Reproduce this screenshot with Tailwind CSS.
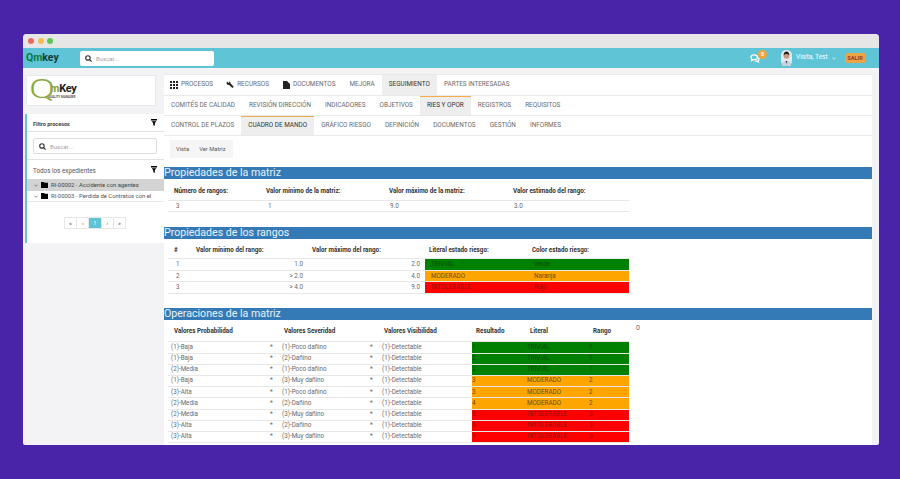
<!DOCTYPE html>
<html lang="es">
<head>
<meta charset="UTF-8">
<title>Qmkey</title>
<script src="https://cdn.jsdelivr.net/npm/@tailwindcss/browser@4"></script>
</head>
<body class="bg-[#4a24a8] h-[479px] overflow-hidden pt-[34px] font-['Roboto',sans-serif] text-[#676a6c]">
<div class="ml-[23px] w-[856px] h-[411px] rounded-t-[4px] rounded-b-[2px] overflow-hidden bg-[#f3f3f6] flex flex-col">
  <!-- window bar -->
  <div class="h-[14px] bg-[#e6e6e6] flex items-center gap-[3.5px] pl-[5px] shrink-0">
    <span class="w-[6px] h-[6px] rounded-full bg-[#ee6a5f]"></span>
    <span class="w-[6px] h-[6px] rounded-full bg-[#f5bd4f]"></span>
    <span class="w-[6px] h-[6px] rounded-full bg-[#61c454]"></span>
  </div>
  <!-- header -->
  <div class="h-[20px] bg-[#5fc4d6] flex items-center shrink-0 pl-[3px] pr-[14px]">
    <div class="w-[54px] text-[10.5px] font-bold leading-none"><span class="text-[#0c7a3c]">Qm</span><span class="text-[#123c3c]">key</span></div>
    <div class="w-[134px] h-[15px] bg-white rounded-[2px] flex items-center pl-[5px] gap-[4px]">
      <svg class="w-[7px] h-[7px]" viewBox="0 0 10 10" fill="none" stroke="#333" stroke-width="1.6"><circle cx="4.2" cy="4.2" r="3.2"/><path d="M6.600 6.600 9.500 9.500"/></svg>
      <span class="text-[6px] text-[#a5a5a5]">Buscar...</span>
    </div>
    <div class="ml-auto flex items-center">
      <div class="relative w-[14px] h-[14px] mr-[17px]">
        <svg class="absolute left-0 top-[3px] w-[10px] h-[9px]" viewBox="0 0 12 11" fill="none" stroke="#fff" stroke-width="1.5"><path d="M5 1C2.600 1 1 2.300 1 4c0 1 .5 1.700 1.200 2.300L1.800 8l2-1.100c.4.100.8.100 1.200.100 2.400 0 4-1.300 4-3S7.400 1 5 1Z"/><path d="M10.200 4.500c.6.500.8 1.100.8 1.700 0 .8-.4 1.400-1 1.900l.3 1.500-1.800-.9c-1 .1-2-.1-2.700-.6"/></svg>
        <span class="absolute left-[8px] -top-[1px] w-[9px] h-[9px] rounded-full bg-[#f0a63c] text-white text-[5px] font-bold leading-[9px] text-center">0</span>
      </div>
      <svg class="w-[11px] h-[16px] mr-[4px]" viewBox="0 0 11 16"><rect width="11" height="16" rx="5" fill="#e3e6ea"/><path d="M1 16c0-4 2-5 4.500-5s4.500 1 4.500 5Z" fill="#c9d3dc"/><circle cx="5.500" cy="6" r="2.800" fill="#c79a80"/><path d="M2.700 5.500C2.500 2.500 4 1.500 5.500 1.500s3 1 2.800 4C7.500 4 5 4 4.300 4.200 3.500 4.300 3 5 2.700 5.500Z" fill="#22201e"/><path d="M4.700 11h1.600l-.8 3Z" fill="#33414d"/></svg>
      <span class="text-[6.500px] text-white w-[36px] whitespace-nowrap">Visita, Test</span>
      <svg class="w-[4px] h-[3px] mr-[9px]" viewBox="0 0 6 4" fill="none" stroke="#fff" stroke-width="1"><path d="M.5.700 3 3.200 5.500.700"/></svg>
      <span class="w-[20px] h-[10px] bg-[#eba544] rounded-[1px] text-[#9c3434] text-[5.600px] font-bold leading-[10px] text-center">SALIR</span>
    </div>
  </div>
  <!-- body -->
  <div class="flex flex-1 min-h-0 pl-[2px]">
    <!-- left -->
    <div class="w-[139px] shrink-0 flex flex-col pt-[7px]">
      <div class="ml-[1px] w-[130px] h-[31px] bg-white border border-[#e7eaec] flex items-center pl-[2px] shrink-0">
        <div class="w-[50px] h-[20px] flex flex-col">
          <div class="flex items-center h-[18px] leading-none">
            <span class="w-[17px] text-[25px] font-light text-[#8aa93f] origin-left scale-x-[1.55] leading-[18px]">Q</span>
            <span class="ml-[4px] -mt-[3px] text-[11px] font-bold tracking-[-0.3px] whitespace-nowrap"><span class="text-[#7f9e3a]">m</span><span class="text-[#222]">Key</span></span>
          </div>
          <span class="ml-[19px] -mt-[3px] text-[3px] font-bold text-[#555] leading-none whitespace-nowrap">QUALITY MANAGER</span>
        </div>
      </div>
      <div class="mt-[8px] h-[129px] bg-white border-l-2 border-[#5fc4d6] shrink-0">
        <div class="h-[18px] border-b border-[#e2e2e2] flex items-center justify-between pl-[6px] pr-[7px]">
          <span class="pt-[4px] text-[5.500px] font-bold text-[#444]">Filtro procesos</span>
          <svg class="w-[6px] h-[7px]" viewBox="0 0 6 7"><rect width="6" height="1.500"/><path d="M.7 2.200h4.600L3.800 4.200V7L2.200 6V4.200Z"/></svg>
        </div>
        <div class="h-[28px] border-b border-[#e2e2e2] pl-[6px] pt-[6px]">
          <div class="w-[124px] h-[16px] border border-[#dcdcdc] rounded-[2px] flex items-center pl-[5px] gap-[4px]">
            <svg class="w-[7px] h-[7px]" viewBox="0 0 10 10" fill="none" stroke="#333" stroke-width="1.6"><circle cx="4.200" cy="4.200" r="3.200"/><path d="M6.600 6.600 9.500 9.500"/></svg>
            <span class="text-[6px] text-[#a5a5a5]">Buscar...</span>
          </div>
        </div>
        <div class="h-[19px] flex items-center justify-between pl-[6px] pr-[7px]">
          <span class="pt-[4px] text-[6.300px] text-[#555]">Todos los expedientes</span>
          <svg class="w-[6px] h-[7px] -mt-px" viewBox="0 0 6 7"><rect width="6" height="1.500"/><path d="M.7 2.200h4.600L3.800 4.200V7L2.200 6V4.200Z"/></svg>
        </div>
        <div class="h-[12px] bg-[#d3d3d3] flex items-center pl-[7px] text-[5.900px] text-[#444] whitespace-nowrap">
          <svg class="w-[4px] h-[3px] mr-[3px]" viewBox="0 0 6 4" fill="none" stroke="#555" stroke-width="1"><path d="M.5.700 3 3.200 5.500.700"/></svg>
          <svg class="w-[7px] h-[6px] mr-[3px]" viewBox="0 0 7 6"><path d="M0 0h3l.7.800H7V6H0Z"/></svg>RI-00002 - Accidente con agentes
        </div>
        <div class="h-[11px] border-b border-[#e7e7e7] flex items-center pl-[7px] text-[5.900px] text-[#555] whitespace-nowrap">
          <svg class="w-[4px] h-[3px] mr-[3px]" viewBox="0 0 6 4" fill="none" stroke="#555" stroke-width="1"><path d="M.5.700 3 3.200 5.500.700"/></svg>
          <svg class="w-[7px] h-[6px] mr-[3px]" viewBox="0 0 7 6"><path d="M0 0h3l.7.800H7V6H0Z"/></svg>RI-00003 - Perdida de Contratos con el
        </div>
        <div class="mt-[15px] ml-[37px] flex h-[12px] w-[62px] border border-[#e7e7e7] text-[5px] text-[#555] leading-[10px] text-center">
          <span class="flex-1 border-r border-[#e7e7e7] font-bold">&laquo;</span>
          <span class="flex-1 border-r border-[#e7e7e7] font-bold">&lsaquo;</span>
          <span class="flex-1 bg-[#5fc4d6] text-white">1</span>
          <span class="flex-1 border-x border-[#e7e7e7] font-bold">&rsaquo;</span>
          <span class="flex-1 font-bold">&raquo;</span>
        </div>
      </div>
    </div>
    <!-- main -->
    <div class="w-[708px] h-[377px] mt-[6px] bg-white border-t border-[#e7eaec] shrink-0 relative overflow-hidden">
      <div class="h-[21px] flex border-b border-[#e7eaec] text-[6.400px] uppercase">
        <span class="flex items-center gap-[3px] px-[6px]">
          <svg class="w-[8px] h-[8px]" viewBox="0 0 8 8" fill="#222"><path d="M0 0h2v2H0zM3 0h2v2H3zM6 0h2v2H6zM0 3h2v2H0zM3 3h2v2H3zM6 3h2v2H6zM0 6h2v2H0zM3 6h2v2H3zM6 6h2v2H6z"/></svg>Procesos</span>
        <span class="flex items-center gap-[3px] px-[7px]">
          <svg class="w-[8px] h-[8px]" viewBox="0 0 8 8" fill="#222"><path d="M.3 2 1.800.3 1.900 1.800 3 1.700 3.300.5c.8.300 1.200 1 1.100 1.800l3.300 3.400-1.300 1.400-3.300-3.200C2 4.200.7 3.300.3 2Z"/></svg>Recursos</span>
        <span class="flex items-center gap-[3px] px-[7px]">
          <svg class="w-[7px] h-[8px]" viewBox="0 0 7 8" fill="#222"><path d="M0 0h4l3 3v5H0Z"/></svg>Documentos</span>
        <span class="flex items-center px-[7px]">Mejora</span>
        <span class="flex items-center px-[7px] bg-[#eeeeee] border-t border-[#f0ad4e] text-[#333] -mt-px">Seguimiento</span>
        <span class="flex items-center px-[7px]">Partes interesadas</span>
      </div>
      <div class="h-[20px] flex border-b border-[#e7eaec] text-[6.400px] uppercase">
        <span class="flex items-center px-[7px]">Comités de calidad</span>
        <span class="flex items-center px-[7px]">Revisión dirección</span>
        <span class="flex items-center px-[7px]">Indicadores</span>
        <span class="flex items-center px-[7px]">Objetivos</span>
        <span class="flex items-center px-[7px] bg-[#eeeeee] border-t border-[#f0ad4e] text-[#333]">Ries y opor</span>
        <span class="flex items-center px-[7px]">Registros</span>
        <span class="flex items-center px-[7px]">Requisitos</span>
      </div>
      <div class="h-[20px] flex border-b border-[#e7eaec] text-[6.400px] uppercase">
        <span class="flex items-center px-[7px]">Control de plazos</span>
        <span class="flex items-center px-[7px] bg-[#eeeeee] border-t border-[#f0ad4e] text-[#333]">Cuadro de mando</span>
        <span class="flex items-center px-[7px]">Gráfico riesgo</span>
        <span class="flex items-center px-[7px]">Definición</span>
        <span class="flex items-center px-[7px]">Documentos</span>
        <span class="flex items-center px-[7px]">Gestión</span>
        <span class="flex items-center px-[7px]">Informes</span>
      </div>
      <div class="flex pl-[6px] pt-[4px]">
        <div class="flex h-[18px] items-center w-[63px] bg-[#f5f5f5] text-[5.800px] text-[#555] pl-[6px] gap-[10px]"><span>Vista</span><span>Ver Matriz</span></div>
      </div>

      <h2 class="mt-[9px] h-[12px] bg-[#337ab7] text-white/90 text-[10.600px] leading-[12px] whitespace-nowrap">Propiedades de la matriz</h2>
      <table class="ml-[4px] w-[461px] table-fixed border-collapse text-[6.300px] [&_th]:pt-[5px] [&_td]:pt-px">
        <colgroup><col class="w-[92px]"><col class="w-[123px]"><col class="w-[124px]"><col class="w-[122px]"></colgroup>
        <thead class="text-[#333]"><tr class="h-[21px] border-b border-[#e7e7e7] text-left font-bold">
          <th class="pl-[6px]">Número de rangos:</th><th class="pl-[6px]">Valor mínimo de la matriz:</th><th class="pl-[6px]">Valor máximo de la matriz:</th><th class="pl-[6px]">Valor estimado del rango:</th>
        </tr></thead>
        <tbody><tr class="h-[11px] border-b border-[#e7e7e7]">
          <td class="pl-[8px]">3</td><td class="pl-[8px]">1</td><td class="pl-[7px]">9.0</td><td class="pl-[7px]">3.0</td>
        </tr></tbody>
      </table>

      <h2 class="mt-[15px] h-[12px] bg-[#337ab7] text-white/90 text-[10.600px] leading-[12px] whitespace-nowrap">Propiedades de los rangos</h2>
      <table class="ml-[4px] w-[461px] table-fixed border-collapse text-[6.300px] [&_th]:pt-[5px] [&_td]:pt-px">
        <colgroup><col class="w-[22px]"><col class="w-[117px]"><col class="w-[118px]"><col class="w-[103px]"><col class="w-[101px]"></colgroup>
        <thead class="text-[#333]"><tr class="h-[20px] border-b border-[#e7e7e7] text-left font-bold">
          <th class="pl-[6px]">#</th><th class="pl-[6px]">Valor mínimo del rango:</th><th class="pl-[5px]">Valor máximo del rango:</th><th class="pl-[4px]">Literal estado riesgo:</th><th class="pl-[4px]">Color estado riesgo:</th>
        </tr></thead>
        <tbody>
          <tr class="h-[11.500px] border-b border-[#e7e7e7]"><td class="pl-[8px]">1</td><td class="pr-[4px] text-right">1.0</td><td class="pr-[5px] text-right">2.0</td><td class="pl-[6px] bg-[#008000] text-[#0a4a0a]">TRIVIAL</td><td class="pl-[6px] bg-[#008000] text-[#0a4a0a]">Verde</td></tr>
          <tr class="h-[11.500px] border-b border-[#e7e7e7]"><td class="pl-[8px]">2</td><td class="pr-[4px] text-right">&gt; 2.0</td><td class="pr-[5px] text-right">4.0</td><td class="pl-[6px] bg-[#ffa500] text-[#6b4a10]">MODERADO</td><td class="pl-[6px] bg-[#ffa500] text-[#6b4a10]">Naranja</td></tr>
          <tr class="h-[11.500px] border-b border-[#e7e7e7]"><td class="pl-[8px]">3</td><td class="pr-[4px] text-right">&gt; 4.0</td><td class="pr-[5px] text-right">9.0</td><td class="pl-[6px] bg-[#ff0000] text-[#8a1414]">INTOLERABLE</td><td class="pl-[6px] bg-[#ff0000] text-[#8a1414]">Rojo</td></tr>
        </tbody>
      </table>

      <h2 class="mt-[14px] h-[12px] bg-[#337ab7] text-white/90 text-[10.600px] leading-[12px] whitespace-nowrap">Operaciones de la matriz</h2>
      <div class="flex items-start">
      <table class="ml-[4px] w-[461px] table-fixed border-collapse text-[6.300px] [&_th]:pt-[3px] [&_td:nth-child(2)]:pl-[3px] [&_td:nth-child(4)]:pl-[3px]">
        <colgroup><col class="w-[99px]"><col class="w-[14px]"><col class="w-[86px]"><col class="w-[14px]"><col class="w-[91px]"><col class="w-[55px]"><col class="w-[62px]"><col class="w-[40px]"></colgroup>
        <thead class="text-[#333]"><tr class="h-[22px] border-b border-[#e7e7e7] text-left font-bold">
          <th class="pl-[6px]">Valores Probabilidad</th><th></th><th class="pl-[3px]">Valores Severidad</th><th></th><th class="pl-[3px]">Valores Visibilidad</th><th class="pl-[4px]">Resultado</th><th class="pl-[3px]">Literal</th><th class="pl-[4px]">Rango</th>
        </tr></thead>
        <tbody>
          <tr class="h-[11.200px] border-b border-[#e7e7e7]"><td class="pl-[3px]">(1)-Baja</td><td>*</td><td class="pl-[1px]">(1)-Poco dañino</td><td>*</td><td class="pl-[1px]">(1)-Detectable</td><td class="bg-[#008000] text-[#0a4a0a]">1</td><td class="bg-[#008000] text-[#0a4a0a]">TRIVIAL</td><td class="bg-[#008000] text-[#0a4a0a]">1</td></tr>
          <tr class="h-[11.200px] border-b border-[#e7e7e7]"><td class="pl-[3px]">(1)-Baja</td><td>*</td><td class="pl-[1px]">(2)-Dañino</td><td>*</td><td class="pl-[1px]">(1)-Detectable</td><td class="bg-[#008000] text-[#0a4a0a]">2</td><td class="bg-[#008000] text-[#0a4a0a]">TRIVIAL</td><td class="bg-[#008000] text-[#0a4a0a]">1</td></tr>
          <tr class="h-[11.200px] border-b border-[#e7e7e7]"><td class="pl-[3px]">(2)-Media</td><td>*</td><td class="pl-[1px]">(1)-Poco dañino</td><td>*</td><td class="pl-[1px]">(1)-Detectable</td><td class="bg-[#008000] text-[#0a4a0a]">2</td><td class="bg-[#008000] text-[#0a4a0a]">TRIVIAL</td><td class="bg-[#008000] text-[#0a4a0a]">1</td></tr>
          <tr class="h-[11.200px] border-b border-[#e7e7e7]"><td class="pl-[3px]">(1)-Baja</td><td>*</td><td class="pl-[1px]">(3)-Muy dañino</td><td>*</td><td class="pl-[1px]">(1)-Detectable</td><td class="bg-[#ffa500] text-[#6b4a10]">3</td><td class="bg-[#ffa500] text-[#6b4a10]">MODERADO</td><td class="bg-[#ffa500] text-[#6b4a10]">2</td></tr>
          <tr class="h-[11.200px] border-b border-[#e7e7e7]"><td class="pl-[3px]">(3)-Alta</td><td>*</td><td class="pl-[1px]">(1)-Poco dañino</td><td>*</td><td class="pl-[1px]">(1)-Detectable</td><td class="bg-[#ffa500] text-[#6b4a10]">3</td><td class="bg-[#ffa500] text-[#6b4a10]">MODERADO</td><td class="bg-[#ffa500] text-[#6b4a10]">2</td></tr>
          <tr class="h-[11.200px] border-b border-[#e7e7e7]"><td class="pl-[3px]">(2)-Media</td><td>*</td><td class="pl-[1px]">(2)-Dañino</td><td>*</td><td class="pl-[1px]">(1)-Detectable</td><td class="bg-[#ffa500] text-[#6b4a10]">4</td><td class="bg-[#ffa500] text-[#6b4a10]">MODERADO</td><td class="bg-[#ffa500] text-[#6b4a10]">2</td></tr>
          <tr class="h-[11.200px] border-b border-[#e7e7e7]"><td class="pl-[3px]">(2)-Media</td><td>*</td><td class="pl-[1px]">(3)-Muy dañino</td><td>*</td><td class="pl-[1px]">(1)-Detectable</td><td class="bg-[#ff0000] text-[#8a1414]">6</td><td class="bg-[#ff0000] text-[#8a1414]">INTOLERABLE</td><td class="bg-[#ff0000] text-[#8a1414]">3</td></tr>
          <tr class="h-[11.200px] border-b border-[#e7e7e7]"><td class="pl-[3px]">(3)-Alta</td><td>*</td><td class="pl-[1px]">(2)-Dañino</td><td>*</td><td class="pl-[1px]">(1)-Detectable</td><td class="bg-[#ff0000] text-[#8a1414]">6</td><td class="bg-[#ff0000] text-[#8a1414]">INTOLERABLE</td><td class="bg-[#ff0000] text-[#8a1414]">3</td></tr>
          <tr class="h-[11.200px] border-b border-[#e7e7e7]"><td class="pl-[3px]">(3)-Alta</td><td>*</td><td class="pl-[1px]">(3)-Muy dañino</td><td>*</td><td class="pl-[1px]">(1)-Detectable</td><td class="bg-[#ff0000] text-[#8a1414]">9</td><td class="bg-[#ff0000] text-[#8a1414]">INTOLERABLE</td><td class="bg-[#ff0000] text-[#8a1414]">3</td></tr>
        </tbody>
      </table>
      <span class="ml-[7px] mt-[5px] text-[7px] leading-none">0</span>
      </div>
      <div class="absolute left-[662px] bottom-[-7px] w-[40px] h-[9px] rounded-t-full bg-[#7fa65a]"></div>
    </div>
  </div>
</div>
</body>
</html>
